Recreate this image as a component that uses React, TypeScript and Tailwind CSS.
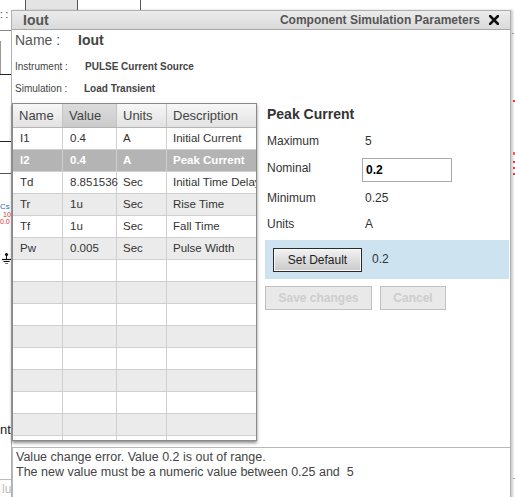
import React from "react";
import type { FC } from "react";

interface IParamRow {
  name: string;
  value: string;
  units: string;
  description: string;
}

const rows: IParamRow[] = [
  { name: "I1", value: "0.4", units: "A", description: "Initial Current" },
  { name: "I2", value: "0.4", units: "A", description: "Peak Current" },
  { name: "Td", value: "8.851536", units: "Sec", description: "Initial Time Delay" },
  { name: "Tr", value: "1u", units: "Sec", description: "Rise Time" },
  { name: "Tf", value: "1u", units: "Sec", description: "Fall Time" },
  { name: "Pw", value: "0.005", units: "Sec", description: "Pulse Width" },
];

const emptyRows = Array.from({ length: 9 }, (_, i) => i);

const gridCols = "grid grid-cols-[50px_54px_50px_89px]";

const ParamTable: FC = () => {
  return (
    <div className="h-[338px] w-[245px] shrink-0 overflow-hidden border border-[#8a8a8a] shadow-[0_2px_3px_rgba(0,0,0,0.45)]">
      <div className={`${gridCols} h-[24px] border-b border-[#b5b5b5] text-[13px] text-[#444]`}>
        <div className="flex items-center border-r border-[#c4c4c4] bg-gradient-to-b from-[#f7f7f7] to-[#e2e2e2] pl-[6px]">Name</div>
        <div className="flex items-center border-r border-[#c4c4c4] bg-gradient-to-b from-[#dcdcdc] to-[#cbcbcb] pl-[6px]">Value</div>
        <div className="flex items-center border-r border-[#c4c4c4] bg-gradient-to-b from-[#f7f7f7] to-[#e2e2e2] pl-[6px]">Units</div>
        <div className="flex items-center bg-gradient-to-b from-[#f7f7f7] to-[#e2e2e2] pl-[6px]">Description</div>
      </div>
      {rows.map((row, i) => {
        const selected = i === 1;
        const stripe = i % 2 === 1 ? "bg-[#ebebeb]" : "bg-white";
        return (
          <div
            key={row.name}
            className={`${gridCols} h-[22px] border-b border-[#cfcfcf] text-[11.5px] ${
              selected ? "bg-[#b4b4b4] font-bold text-white" : `${stripe} text-[#333]`
            }`}
          >
            <div className="flex items-center border-r border-[#cfcfcf] pl-[7px]">{row.name}</div>
            <div className="flex items-center border-r border-[#cfcfcf] pl-[7px]">{row.value}</div>
            <div className="flex items-center border-r border-[#cfcfcf] pl-[6px]">{row.units}</div>
            <div className="flex items-center overflow-hidden whitespace-nowrap pl-[6px]">{row.description}</div>
          </div>
        );
      })}
      {emptyRows.map((n) => (
        <div
          key={n}
          className={`${gridCols} h-[22px] border-b border-[#cfcfcf] ${n % 2 === 1 ? "bg-[#ebebeb]" : "bg-white"}`}
        >
          <div className="border-r border-[#cfcfcf]" />
          <div className="border-r border-[#cfcfcf]" />
          <div className="border-r border-[#cfcfcf]" />
          <div />
        </div>
      ))}
    </div>
  );
};

const DetailPanel: FC = () => {
  return (
    <div className="ml-[8px] flex w-[244px] flex-col pt-[1px] text-[12px] text-[#333]">
      <div className="pl-[2px] text-[14px] leading-[20px] font-bold text-[#333]">Peak Current</div>
      <div className="mt-[7px] flex h-[20px] items-center pl-[2px]">
        <span className="w-[98px]">Maximum</span>
        <span>5</span>
      </div>
      <div className="mt-[7px] flex h-[24px] items-start pl-[2px]">
        <span className="w-[95px] leading-[20px]">Nominal</span>
        <div className="flex h-[24px] w-[90px] items-center border border-[#a9a9a9] bg-white pl-[3px] text-[12px] font-bold text-black">
          0.2
        </div>
      </div>
      <div className="mt-[6px] flex h-[20px] items-center pl-[2px]">
        <span className="w-[98px]">Minimum</span>
        <span>0.25</span>
      </div>
      <div className="mt-[6px] flex h-[20px] items-center pl-[2px]">
        <span className="w-[98px]">Units</span>
        <span>A</span>
      </div>
      <div className="mt-[6px] flex h-[39px] items-start bg-[#cde4f0] pt-[8px] pl-[8px]">
        <button className="h-[24px] w-[89px] border border-[#2a2a2a] bg-gradient-to-b from-[#f3f3f3] to-[#c9c9c9] text-[12px] text-[#222] shadow-[inset_0_0_0_1px_#f8f8f8]">
          Set Default
        </button>
        <span className="ml-[10px] pt-[2px] text-[12px] text-[#333]">0.2</span>
      </div>
      <div className="mt-[7px] flex gap-[8px]">
        <button
          disabled
          className="h-[24px] w-[107px] border border-[#c0c0c0] bg-[#e9e9e9] text-[12px] font-bold text-[#cdcdcd]"
        >
          Save changes
        </button>
        <button
          disabled
          className="h-[24px] w-[66px] border border-[#c0c0c0] bg-[#e9e9e9] text-[12px] font-bold text-[#cdcdcd]"
        >
          Cancel
        </button>
      </div>
    </div>
  );
};

const CanvasBits: FC = () => {
  return (
    <>
      {/* parts of the schematic behind the dialog */}
      <div className="absolute top-0 left-[25px] h-[10px] w-[53px] border-x border-[#555] bg-[#e4e4e4]" />
      <div className="absolute top-0 left-[140px] h-[10px] w-px bg-[#555]" />
      <div className="absolute top-[10px] left-0 text-[10px] leading-[10px] text-[#333]">: :</div>
      <div className="absolute top-[30px] left-0 h-px w-[11px] bg-[#888]" />
      <div className="absolute top-[41px] left-0 h-[33px] w-px bg-[#999]" />
      <div className="absolute top-[74px] left-0 h-px w-[11px] bg-[#222]" />
      <div className="absolute top-[141px] left-0 h-px w-[11px] bg-[#222]" />
      <div className="absolute top-[173px] left-0 h-px w-[11px] bg-[#555]" />
      <div className="absolute top-[203px] left-0 text-[8px] leading-[8px] text-[#2a6fc0]">Cs</div>
      <div className="absolute top-[211px] left-[3px] text-[7px] leading-[7px] text-[#e03030]">10</div>
      <div className="absolute top-[218px] left-0 text-[7px] leading-[7px] text-[#e03030]">0.0</div>
      <svg className="absolute top-[252px] left-[2px]" width="9" height="12" viewBox="0 0 9 12">
        <circle cx="4.5" cy="2.5" r="1.6" fill="#111" />
        <line x1="4.5" y1="2" x2="4.5" y2="7" stroke="#111" strokeWidth="1" />
        <line x1="0" y1="7.5" x2="9" y2="7.5" stroke="#111" strokeWidth="1.2" />
        <line x1="1.5" y1="9.5" x2="7.5" y2="9.5" stroke="#111" strokeWidth="1" />
        <line x1="3" y1="11.5" x2="6" y2="11.5" stroke="#777" strokeWidth="1" />
      </svg>
      <div className="absolute top-[422px] left-0 text-[13px] leading-[16px] text-[#222]">nt</div>
      <div className="absolute top-[479px] left-0 h-px w-[11px] bg-[#bbb]" />
      <div className="absolute top-[481px] left-[2px] text-[12px] leading-[16px] text-[#bbb]">lu</div>
      <div className="absolute top-[33px] left-[512px] h-px w-[2px] bg-[#aaa]" />
      <div className="absolute top-[100px] left-[513px] h-[2px] w-[2px] bg-[#e04040]" />
      <div className="absolute top-[152px] left-[513px] h-[3px] w-[2px] bg-[#e07070]" />
      <div className="absolute top-[161px] left-[513px] h-[2px] w-[2px] bg-[#e04040]" />
      <div className="absolute top-[167px] left-[513px] h-[2px] w-[2px] bg-[#e04040]" />
      <div className="absolute top-[173px] left-[513px] h-[2px] w-[2px] bg-[#e04040]" />
      <div className="absolute top-[478px] left-[513px] h-px w-[2px] bg-[#aaa]" />
    </>
  );
};

const App: FC = () => {
  return (
    <div className="relative h-[497px] w-[515px] overflow-hidden bg-white font-['Liberation_Sans',Arial,sans-serif]">
      <CanvasBits />
      <div className="absolute top-[10px] left-[11px] flex h-[500px] w-[500px] flex-col border border-[#b0b0b0] bg-white shadow-[2px_0_2px_rgba(0,0,0,0.2)]">
        <div className="flex h-[19px] shrink-0 items-center border-b border-[#a8a8a8] bg-gradient-to-b from-[#ececec] to-[#dadada] pr-[11px] pl-[11px]">
          <span className="text-[14px] font-bold text-[#555]">Iout</span>
          <span className="ml-auto text-[12px] font-bold text-[#555]">Component Simulation Parameters</span>
          <svg className="ml-[9px]" width="10" height="10" viewBox="0 0 10 10">
            <path d="M1 1 L9 9 M9 1 L1 9" stroke="#111" strokeWidth="2.6" strokeLinecap="square" />
          </svg>
        </div>
        <div className="flex h-[20px] items-center pl-[3px] text-[14px] text-[#555]">
          <span className="w-[63px]">Name :</span>
          <span className="font-bold text-[#444]">Iout</span>
        </div>
        <div className="mt-[8px] flex h-[16px] items-center pl-[3px] text-[10px] text-[#444]">
          <span className="w-[70px]">Instrument :</span>
          <span className="font-bold">PULSE Current Source</span>
        </div>
        <div className="mt-[6px] flex h-[16px] items-center pl-[3px] text-[10px] text-[#444]">
          <span className="w-[69px]">Simulation :</span>
          <span className="font-bold">Load Transient</span>
        </div>
        <div className="mt-[7px] flex">
          <ParamTable />
          <DetailPanel />
        </div>
        <div className="mt-[6px] flex-1 border-t border-l border-[#b8b8b8] pt-[2px] pl-[3px] text-[12.5px] leading-[15px] text-[#444]">
          <div>Value change error. Value 0.2 is out of range.</div>
          <div>The new value must be a numeric value between 0.25 and&nbsp; 5</div>
        </div>
      </div>
    </div>
  );
};

export default App;
